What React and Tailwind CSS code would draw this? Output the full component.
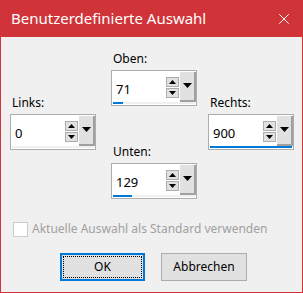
import { X } from 'lucide-react'

const Up = () => (
  <svg width="7" height="4" viewBox="0 0 7 4"><path d="M3.5 0L7 4H0z" fill="#000" /></svg>
)
const Down = () => (
  <svg width="7" height="4" viewBox="0 0 7 4"><path d="M0 0h7L3.5 4z" fill="#000" /></svg>
)

const Spin = ({ value, fill }) => (
  <div className="w-[86px] h-[36px] border border-[#adadad] bg-white flex flex-col">
    <div className="flex flex-1 items-start pt-[6px]">
      <span className="flex-1 pl-[4px] pt-[6px] text-[13px] leading-none text-black">{value}</span>
      <div className="flex flex-col gap-[1px] mr-[1px]">
        <div className="w-[13px] h-[10px] bg-[#e1e1e1] border border-[#adadad] flex items-center justify-center"><Up /></div>
        <div className="w-[13px] h-[10px] bg-[#e1e1e1] border border-[#adadad] flex items-center justify-center"><Down /></div>
      </div>
      <div className="w-[16px] h-[30px] -mt-[5px] bg-[#e1e1e1] border-r-2 border-b-2 border-[#a0a0a0] flex justify-center pt-[11px]">
        <svg width="9" height="5" viewBox="0 0 9 5"><path d="M0 0h9L4.5 5z" fill="#000" /></svg>
      </div>
    </div>
    <div className="h-[3px] mx-[1px] mb-[1px] bg-[#f0f0f0]">
      <div className="h-full bg-[#0078d7]" style={{ width: fill }} />
    </div>
  </div>
)

export default function App() {
  return (
    <div className="w-[303px] h-[293px] flex flex-col bg-[#d13438] font-['Segoe_UI','Noto_Sans',sans-serif] text-[12px] text-black">
      <div className="h-[37px] flex items-center justify-between pl-[11px] pr-[10px] text-white text-[15px]">
        <span>Benutzerdefinierte Auswahl</span>
        <X size={18} strokeWidth={1.3} />
      </div>
      <div className="flex-1 mx-[1px] mb-[1px] bg-[#f0f0f0] flex flex-col">
        <div className="flex pl-[9px] h-[164px]">
          <div className="flex flex-col pt-[57px] w-[101px]">
            <span className="h-[20px] pl-[2px]">Links:</span>
            <Spin value="0" fill="0px" />
          </div>
          <div className="flex flex-col pt-[13px] w-[97px]">
            <span className="h-[20px] pl-[2px]">Oben:</span>
            <Spin value="71" fill="10px" />
            <span className="h-[20px] pl-[2px] mt-[37px]">Unten:</span>
            <Spin value="129" fill="19px" />
          </div>
          <div className="flex flex-col pt-[57px]">
            <span className="h-[20px] pl-[2px]">Rechts:</span>
            <Spin value="900" fill="100%" />
          </div>
        </div>
        <div className="flex items-center gap-[4px] pl-[12px] mt-[19px] text-[#a0a0a0]">
          <div className="w-[15px] h-[15px] border border-[#cccccc] bg-white" />
          <span>Aktuelle Auswahl als Standard verwenden</span>
        </div>
        <div className="flex justify-center gap-[16px] mt-[15px] pl-[4px]">
          <button className="w-[85px] h-[28px] border-2 border-[#0078d7] bg-[#e1e1e1] p-[1px]">
            <div className="w-full h-full border border-dotted border-black flex items-center justify-center">OK</div>
          </button>
          <button className="w-[86px] h-[28px] border border-[#adadad] bg-[#e1e1e1]">Abbrechen</button>
        </div>
      </div>
    </div>
  )
}
